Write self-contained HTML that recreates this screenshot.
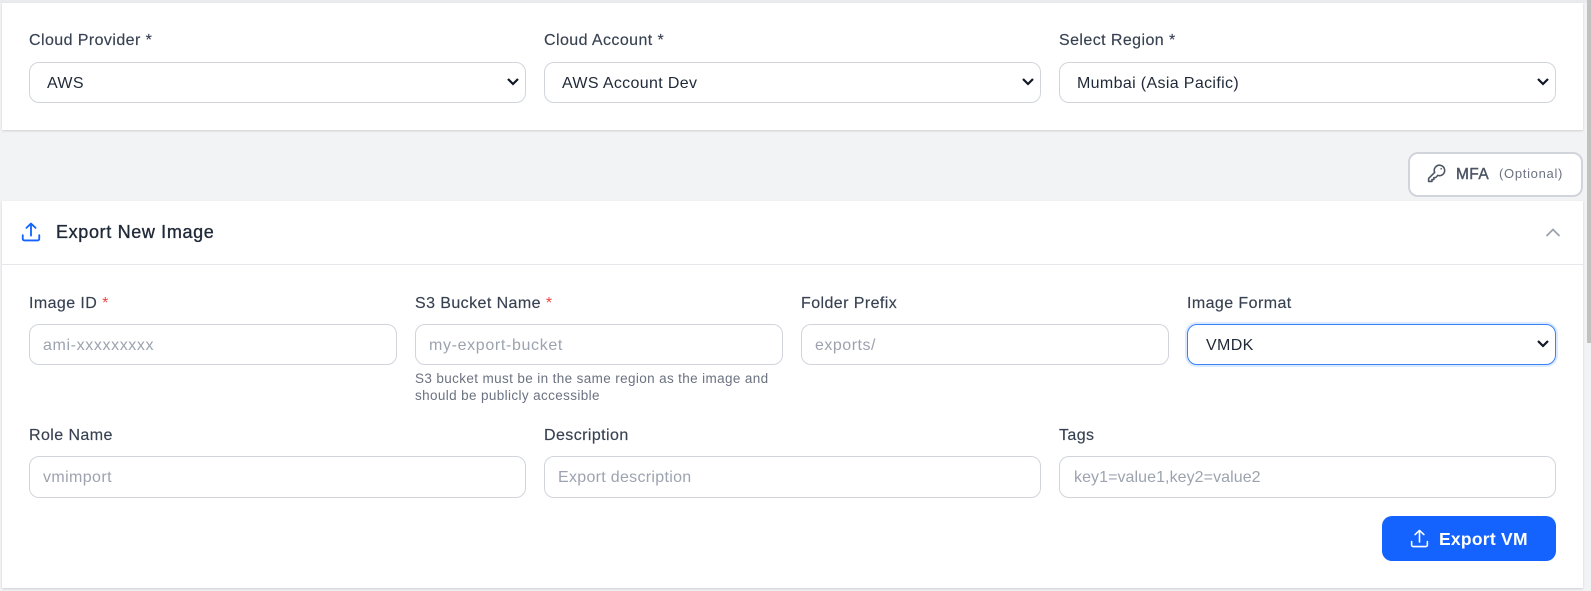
<!DOCTYPE html>
<html><head><meta charset="utf-8">
<style>
html,body{margin:0;padding:0;width:1591px;height:591px;overflow:hidden;background:#f2f3f5;font-family:"Liberation Sans",sans-serif}
.a{position:absolute;white-space:nowrap}
.card{position:absolute;background:#fff;left:2px;width:1581px;box-shadow:0 1px 2px rgba(0,0,0,.15)}
.l{position:absolute;white-space:nowrap;font-size:16px;line-height:20px;color:#374151;letter-spacing:.42px;-webkit-text-stroke:.15px #374151}
.f{position:absolute;box-sizing:border-box;height:41px;background:#fff;border:1px solid #d1d5db;border-radius:10px;font-size:16px;line-height:41px;white-space:nowrap}
.p{color:#9ca3af;padding-left:13px;letter-spacing:.45px}
.s{color:#1f2937;padding-left:17px;letter-spacing:.35px}
.r{color:#ef4444;-webkit-text-stroke:0}
.s svg{position:absolute;right:4px;top:13px}
</style></head><body>
<div class="a" style="left:0;top:0;width:1591px;height:3px;background:#e9ebee"></div>
<div class="a" style="left:1587px;top:0;width:4px;height:343px;background:#c1c1c1"></div>
<div class="card" style="top:3px;height:127px"></div>
<div class="l" style="left:29px;top:31px">Cloud Provider *</div>
<div class="l" style="left:544px;top:31px">Cloud Account *</div>
<div class="l" style="left:1059px;top:31px">Select Region *</div>
<div class="f s" style="left:29px;top:62px;width:497px">AWS<svg width="16" height="12" viewBox="0 0 16 12"><path d="M3 3L8 8 13 3" fill="none" stroke="#111827" stroke-width="2.2"/></svg></div>
<div class="f s" style="left:544px;top:62px;width:497px">AWS Account Dev<svg width="16" height="12" viewBox="0 0 16 12"><path d="M3 3L8 8 13 3" fill="none" stroke="#111827" stroke-width="2.2"/></svg></div>
<div class="f s" style="left:1059px;top:62px;width:497px">Mumbai (Asia Pacific)<svg width="16" height="12" viewBox="0 0 16 12"><path d="M3 3L8 8 13 3" fill="none" stroke="#111827" stroke-width="2.2"/></svg></div>

<div class="a" style="left:1408px;top:152px;width:175px;height:45px;box-sizing:border-box;background:#fff;border:2px solid #d1d5db;border-radius:10px"></div>
<svg class="a" style="left:1426px;top:163px" width="21" height="21" viewBox="0 0 24 24" fill="none" stroke="#4b5563" stroke-width="1.8" stroke-linecap="round" stroke-linejoin="round"><path d="M15.7 2.5a6 6 0 0 1 1.2 11.8 6 6 0 0 1-3.4-.2L11 16.7H9v2.2H6.8v2.2H3v-3.4l6.9-6.9A6 6 0 0 1 15.7 2.5z"/><path d="M17.3 6.6h.1"/></svg>
<div class="a" style="left:1456px;top:164px;font-size:15.5px;line-height:21px;color:#4b5563;letter-spacing:.4px;-webkit-text-stroke:.4px #4b5563">MFA</div>
<div class="a" style="left:1499px;top:164px;font-size:13px;line-height:19px;color:#6b7280;letter-spacing:.7px">(Optional)</div>

<div class="card" style="top:201px;height:387px"></div>
<div class="a" style="left:2px;top:264px;width:1581px;height:1px;background:#e5e7eb"></div>
<svg class="a" style="left:20px;top:221px" width="22" height="22" viewBox="0 0 24 24" fill="none" stroke="#1463ff" stroke-width="2" stroke-linecap="round" stroke-linejoin="round"><path d="M3 15.5v4a1.7 1.7 0 0 0 1.7 1.7h14.6a1.7 1.7 0 0 0 1.7-1.7v-4"/><path d="M7 7.5L12 2.8l5 4.7"/><path d="M12 3v13"/></svg>
<div class="a" style="left:56px;top:221px;font-size:18px;line-height:23px;color:#1f2937;letter-spacing:.65px;-webkit-text-stroke:.35px #1f2937">Export New Image</div>
<svg class="a" style="left:1544px;top:226px" width="18" height="14" viewBox="0 0 18 14" fill="none" stroke="#9ca3af" stroke-width="1.8"><path d="M2.5 10L9 3.5 15.5 10"/></svg>

<div class="l" style="left:29px;top:294px">Image ID <span class="r">*</span></div>
<div class="l" style="left:415px;top:294px">S3 Bucket Name <span class="r">*</span></div>
<div class="l" style="left:801px;top:294px">Folder Prefix</div>
<div class="l" style="left:1187px;top:294px">Image Format</div>
<div class="f p" style="left:29px;top:324px;width:368px;letter-spacing:.62px">ami-xxxxxxxxx</div>
<div class="f p" style="left:415px;top:324px;width:368px;letter-spacing:.65px">my-export-bucket</div>
<div class="f p" style="left:801px;top:324px;width:368px;letter-spacing:.5px">exports/</div>
<div class="f s" style="left:1187px;top:324px;width:369px;border-color:#3b82f6;box-shadow:0 0 0 2px #dbeafe;padding-left:18px">VMDK<svg width="16" height="12" viewBox="0 0 16 12"><path d="M3 3L8 8 13 3" fill="none" stroke="#111827" stroke-width="2.2"/></svg></div>
<div class="a" style="left:415px;top:370px;font-size:13.5px;line-height:17px;color:#6b7280;letter-spacing:.37px">S3 bucket must be in the same region as the image and<br>should be publicly accessible</div>

<div class="l" style="left:29px;top:426px">Role Name</div>
<div class="l" style="left:544px;top:426px">Description</div>
<div class="l" style="left:1059px;top:426px">Tags</div>
<div class="f p" style="left:29px;top:456px;width:497px;height:42px;letter-spacing:.39px">vmimport</div>
<div class="f p" style="left:544px;top:456px;width:497px;height:42px;letter-spacing:.3px">Export description</div>
<div class="f p" style="left:1059px;top:456px;width:497px;height:42px;letter-spacing:.07px;padding-left:14px">key1=value1,key2=value2</div>

<div class="a" style="left:1382px;top:516px;width:174px;height:45px;background:#1463ff;border-radius:10px"></div>
<svg class="a" style="left:1409px;top:528px" width="21" height="21" viewBox="0 0 24 24" fill="none" stroke="#fff" stroke-width="1.8" stroke-linecap="round" stroke-linejoin="round"><path d="M3 15.5v4a1.7 1.7 0 0 0 1.7 1.7h14.6a1.7 1.7 0 0 0 1.7-1.7v-4"/><path d="M7 7.5L12 2.8l5 4.7"/><path d="M12 3v13"/></svg>
<div class="a" style="left:1439px;top:528px;font-size:17.5px;line-height:22px;font-weight:700;color:#fff;letter-spacing:.25px">Export VM</div>
</body></html>
